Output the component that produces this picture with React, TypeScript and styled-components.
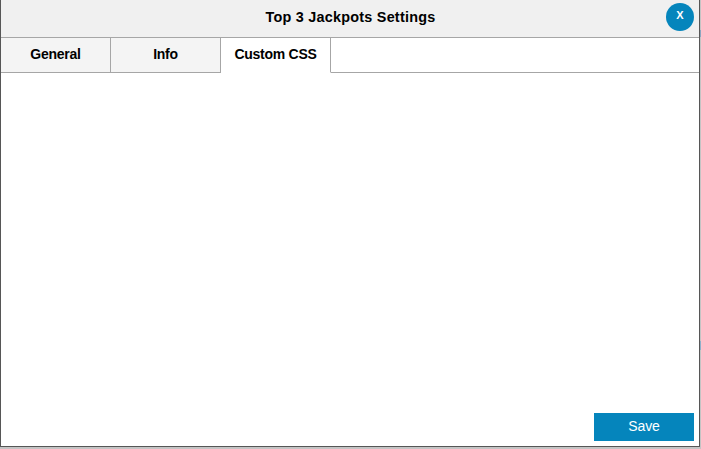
import React from "react";
import styled, { createGlobalStyle } from "styled-components";

const GlobalStyle = createGlobalStyle`
  * { box-sizing: border-box; }
  body {
    margin: 0;
    overflow: hidden;
    font-family: "Liberation Sans", Arial, sans-serif;
    color: #000;
  }
`;

const Backdrop = styled.div`
  width: 701px;
  height: 449px;
  padding: 0 1px 2px 0;
  background: linear-gradient(
    #c4c4c4 0 30px,
    #8ba6c0 30px 37px,
    #c4c4c4 37px 341px,
    #8fb0ca 341px 350px,
    #c4c4c4 350px
  );
`;

const Dialog = styled.section`
  display: flex;
  flex-direction: column;
  height: 447px;
  border: 1px solid #565656;
  border-top: 0;
  background: #fff;
`;

const Header = styled.header`
  display: grid;
  grid-template-columns: 1fr auto 1fr;
  height: 38px;
  padding: 3px 5px 0 6px;
  border-bottom: 1px solid #a6a6a6;
  background: #f0f0f0;
`;

const Title = styled.h1`
  grid-column: 2;
  margin: 0;
  font-size: 14.4px;
  line-height: 28px;
  letter-spacing: 0.24px;
  white-space: nowrap;
`;

const CloseButton = styled.button`
  justify-self: end;
  width: 28px;
  height: 28px;
  padding: 0 0 3px;
  border: 0;
  border-radius: 50%;
  background: #0585bc;
  color: #fff;
  font: bold 11px/25px "Liberation Sans", Arial, sans-serif;
`;

const TabBar = styled.nav`
  display: grid;
  grid-template-columns: 110px 110px 110px 1fr;
  height: 35px;
`;

const Tab = styled.button<{ $active?: boolean }>`
  padding: 0 0 2px;
  border: 0;
  border-right: 1px solid #a6a6a6;
  border-bottom: 1px solid ${({ $active }) => ($active ? "#fff" : "#a6a6a6")};
  background: ${({ $active }) => ($active ? "#fff" : "#f4f4f4")};
  color: #000;
  font: bold 14px/32px "Liberation Sans", Arial, sans-serif;
  letter-spacing: -0.26px;
  white-space: nowrap;
`;

const TabFiller = styled.div`
  border-bottom: 1px solid #a6a6a6;
`;

const Content = styled.main`
  flex: 1;
`;

const Footer = styled.footer`
  display: flex;
  justify-content: flex-end;
  padding: 0 5px 5px;
`;

const SaveButton = styled.button`
  width: 100px;
  height: 28px;
  padding: 0 0 1px;
  border: 0;
  background: #0585bc;
  color: #fff;
  font: 14px/27px "Liberation Sans", Arial, sans-serif;
  letter-spacing: -0.1px;
`;

const tabs = ["General", "Info", "Custom CSS"];

export default function App() {
  const [active, setActive] = React.useState("Custom CSS");
  return (
    <>
      <GlobalStyle />
      <Backdrop>
        <Dialog>
          <Header>
            <span />
            <Title>Top 3 Jackpots Settings</Title>
            <CloseButton>X</CloseButton>
          </Header>
          <TabBar>
            {tabs.map((tab) => (
              <Tab key={tab} $active={tab === active} onClick={() => setActive(tab)}>
                {tab}
              </Tab>
            ))}
            <TabFiller />
          </TabBar>
          <Content />
          <Footer>
            <SaveButton>Save</SaveButton>
          </Footer>
        </Dialog>
      </Backdrop>
    </>
  );
}
